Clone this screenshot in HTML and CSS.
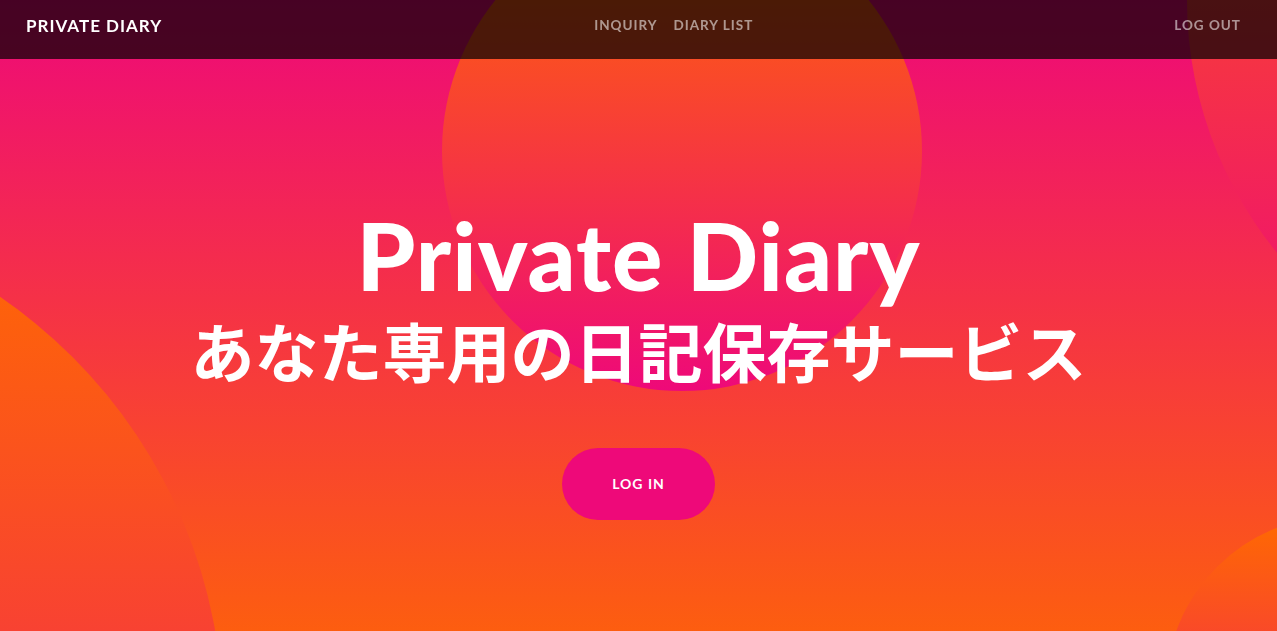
FILE: index.html
```html
<!DOCTYPE html>
<html lang="ja">
<head>
<meta charset="utf-8">
<title>Private Diary</title>
<link rel="stylesheet" href="styles.css">
</head>
<body>
<nav class="navbar">
  <a class="brand" href="#">Private Diary</a>
  <ul class="nav nav-center">
    <li><a class="nav-link" href="#">Inquiry</a></li>
    <li><a class="nav-link" href="#">Diary List</a></li>
  </ul>
  <ul class="nav nav-right">
    <li><a class="nav-link" href="#">Log Out</a></li>
  </ul>
</nav>
<header class="masthead">
  <div class="masthead-content">
    <h1 class="heading">Private Diary</h1>
    <h2 class="subheading">あなた専用の日記保存サービス</h2>
    <a class="btn-xl" href="#">Log In</a>
  </div>
  <div class="bg-circle bg-circle-1"></div>
  <div class="bg-circle bg-circle-2"></div>
  <div class="bg-circle bg-circle-3"></div>
  <div class="bg-circle bg-circle-4"></div>
</header>
</body>
</html>
```

FILE: styles.css
```css
* { box-sizing: border-box; }
html, body {
  margin: 0;
  padding: 0;
  height: 100%;
  overflow: hidden;
}
body {
  font-family: Lato, "Noto Sans CJK JP", sans-serif;
  color: #fff;
}
a { text-decoration: none; }

.navbar {
  position: fixed;
  top: 0;
  left: 0;
  right: 0;
  z-index: 10;
  height: 59px;
  display: flex;
  align-items: center;
  padding: 0 28px 9px 26px;
  background: rgba(0, 0, 0, 0.7);
}
.brand {
  color: #fff;
  font-size: 17px;
  font-weight: 700;
  letter-spacing: 1px;
  text-transform: uppercase;
}
.nav {
  list-style: none;
  margin: 0;
  padding: 0;
  display: flex;
}
.nav-center {
  margin: 0 auto;
  padding-left: 19px;
}
.nav-link {
  display: block;
  padding: 0 8px;
  font-size: 13.5px;
  font-weight: 700;
  letter-spacing: 1px;
  text-transform: uppercase;
  color: rgba(255, 255, 255, 0.55);
}

.masthead {
  position: relative;
  overflow: hidden;
  height: 631px;
  padding-top: 199px;
  background: linear-gradient(180deg, #ee0979 0px, #ff6a00 725px);
}
.masthead-content {
  position: relative;
  z-index: 1;
  display: flex;
  flex-direction: column;
  align-items: center;
  text-align: center;
}
.heading {
  margin: 0;
  font-family: Lato, sans-serif;
  font-weight: 900;
  font-size: 94px;
  letter-spacing: 1px;
  line-height: 1.2;
}
.subheading {
  margin: -1px 0 0;
  font-family: "Noto Sans CJK JP", sans-serif;
  font-weight: 700;
  font-size: 64px;
  line-height: 1.2;
}
.btn-xl {
  margin-top: 60px;
  display: block;
  padding: 26px 50px;
  border-radius: 48px;
  background: #ee0979;
  color: #fff;
  font-size: 14px;
  font-weight: 700;
  line-height: 20px;
  letter-spacing: 1px;
  text-transform: uppercase;
}

.bg-circle {
  position: absolute;
  z-index: 0;
  border-radius: 50%;
  background: linear-gradient(0deg, #ee0979 0%, #ff6a00 100%);
}
.bg-circle-1 {
  left: -803px;
  top: 207px;
  width: 1026px;
  height: 1026px;
}
.bg-circle-2 {
  left: 1187px;
  top: -400px;
  width: 800px;
  height: 800px;
}
.bg-circle-3 {
  left: 1166px;
  top: 516px;
  width: 348px;
  height: 348px;
}
.bg-circle-4 {
  left: 442px;
  top: -89px;
  width: 480px;
  height: 480px;
}
```
